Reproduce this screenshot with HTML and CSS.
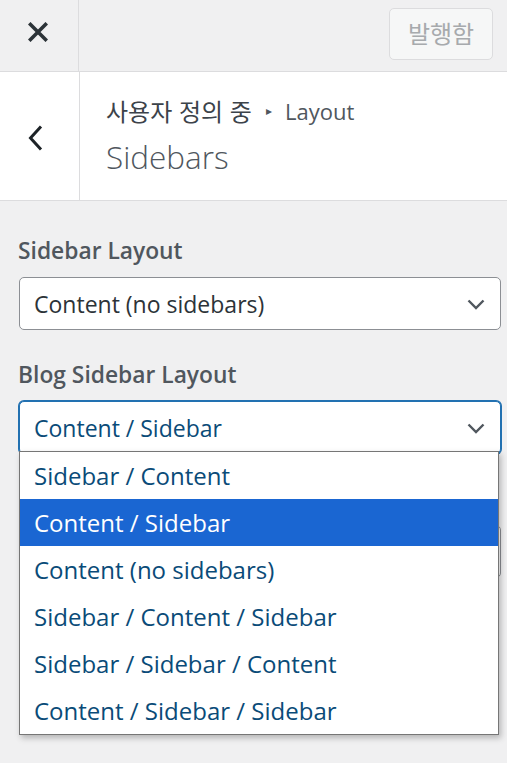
FILE: index.html
```html
<!DOCTYPE html>
<html lang="ko">
<head>
<meta charset="utf-8">
<title>Customizer - Sidebars</title>
<link rel="stylesheet" href="styles.css">
</head>
<body>
<div class="topbar">
  <button class="close" aria-label="Close">
    <svg width="20" height="20" viewBox="0 0 20 20"><path d="M2.5 2.5 L17.5 17.5 M17.5 2.5 L2.5 17.5" stroke="#2c3338" stroke-width="3.6" stroke-linecap="square" fill="none"/></svg>
  </button>
  <div class="spacer"></div>
  <button class="publish">발행함</button>
</div>
<div class="section-head">
  <button class="back" aria-label="Back">
    <svg width="16" height="26" viewBox="0 0 16 26"><path d="M13 1.5 L2.5 13 L13 24.5" stroke="#1d2327" stroke-width="3" fill="none"/></svg>
  </button>
  <div class="titles">
    <div class="crumb"><span class="ko">사용자 정의 중</span><span class="tri">▸</span><span>Layout</span></div>
    <h3 class="title">Sidebars</h3>
  </div>
</div>
<div class="controls">
  <div class="control">
    <div class="label">Sidebar Layout</div>
    <div class="select"><span>Content (no sidebars)</span>
      <svg class="chev" width="18" height="11" viewBox="0 0 18 11"><path d="M1.5 1.5 L9 9 L16.5 1.5" stroke="#50575e" stroke-width="2.4" fill="none"/></svg>
    </div>
  </div>
  <div class="control open">
    <div class="label">Blog Sidebar Layout</div>
    <div class="select focus"><span>Content / Sidebar</span>
      <svg class="chev" width="18" height="11" viewBox="0 0 18 11"><path d="M1.5 1.5 L9 9 L16.5 1.5" stroke="#50575e" stroke-width="2.4" fill="none"/></svg>
    </div>
    <ul class="dropdown">
      <li>Sidebar / Content</li>
      <li class="sel">Content / Sidebar</li>
      <li>Content (no sidebars)</li>
      <li>Sidebar / Content / Sidebar</li>
      <li>Sidebar / Sidebar / Content</li>
      <li>Content / Sidebar / Sidebar</li>
    </ul>
  </div>
  <div class="control">
    <div class="label-space"></div>
    <div class="select"></div>
  </div>
</div>
</body>
</html>
```
FILE: styles.css
```css
* { box-sizing: border-box; }
html, body { margin: 0; padding: 0; }
body {
  background: #f0f0f1;
  font-family: "Open Sans", "Noto Sans", "Noto Sans CJK KR", sans-serif;
  color: #50575e;
  width: 507px;
  height: 763px;
  overflow: hidden;
}
button { font-family: inherit; margin: 0; cursor: pointer; }

.topbar {
  display: flex;
  align-items: flex-start;
  height: 72px;
  border-bottom: 1px solid #dcdcde;
  background: #f0f0f1;
}
.close {
  width: 79px;
  height: 71px;
  border: 0;
  border-right: 1px solid #dcdcde;
  background: transparent;
  display: flex;
  align-items: center;
  justify-content: center;
  padding: 0 3px 8px 0;
}
.spacer { flex: 1; }
.publish {
  margin: 8px 14px 0 0;
  width: 104px;
  height: 52px;
  border: 1px solid #dcdcde;
  border-radius: 5px;
  background: #f6f7f7;
  color: #a7aaad;
  font-family: "Noto Sans CJK KR", sans-serif;
  font-size: 24px;
  padding: 0 0 3px;
}

.section-head {
  display: flex;
  height: 129px;
  background: #fff;
  border-bottom: 1px solid #dcdcde;
}
.back {
  width: 80px;
  height: 128px;
  border: 0;
  border-right: 1px solid #dcdcde;
  background: #fff;
  display: flex;
  align-items: center;
  justify-content: center;
  padding: 4px 7px 0 0;
}
.titles {
  padding: 23px 0 0 26px;
}
.crumb {
  display: flex;
  align-items: center;
  font-size: 22px;
  line-height: 30px;
  color: #50575e;
}
.crumb .ko {
  font-family: "Noto Sans CJK KR", sans-serif;
  font-size: 24px;
  color: #3c434a;
}
.crumb .tri {
  font-size: 12px;
  color: #50575e;
  margin: 1px 13px 0 14px;
}
.title {
  margin: 11px 0 0;
  font-size: 31.5px;
  font-weight: 300;
  line-height: 40px;
  color: #50575e;
}

.controls {
  padding: 34px 6px 0 19px;
}
.control {
  position: relative;
  margin-bottom: 29px;
}
.label {
  font-size: 22.8px;
  font-weight: 600;
  line-height: 31px;
  color: #50575e;
  margin-left: -1px;
  margin-bottom: 11px;
}
.label-space {
  height: 42px;
}
.select {
  display: flex;
  align-items: center;
  justify-content: space-between;
  height: 53px;
  background: #fff;
  border: 1px solid #8c8f94;
  border-radius: 5px;
  padding: 0 15px 0 14px;
  font-size: 23px;
  color: #2c3338;
}
.select.focus {
  border-color: #2271b1;
  box-shadow: 0 0 0 1px #2271b1;
  color: #0a4b78;
}
.chev { margin-top: 2px; }

.dropdown {
  position: absolute;
  left: 0;
  top: 92px;
  width: 480px;
  margin: 0;
  padding: 0;
  list-style: none;
  background: #fff;
  border: 1px solid #767676;
  box-shadow: 2px 3px 6px rgba(0,0,0,0.25);
  z-index: 5;
}
.dropdown li {
  height: 47px;
  line-height: 47px;
  padding-left: 14px;
  font-size: 24px;
  color: #0a4b78;
}
.dropdown li.sel {
  background: #1a66d2;
  color: #fff;
}
```
